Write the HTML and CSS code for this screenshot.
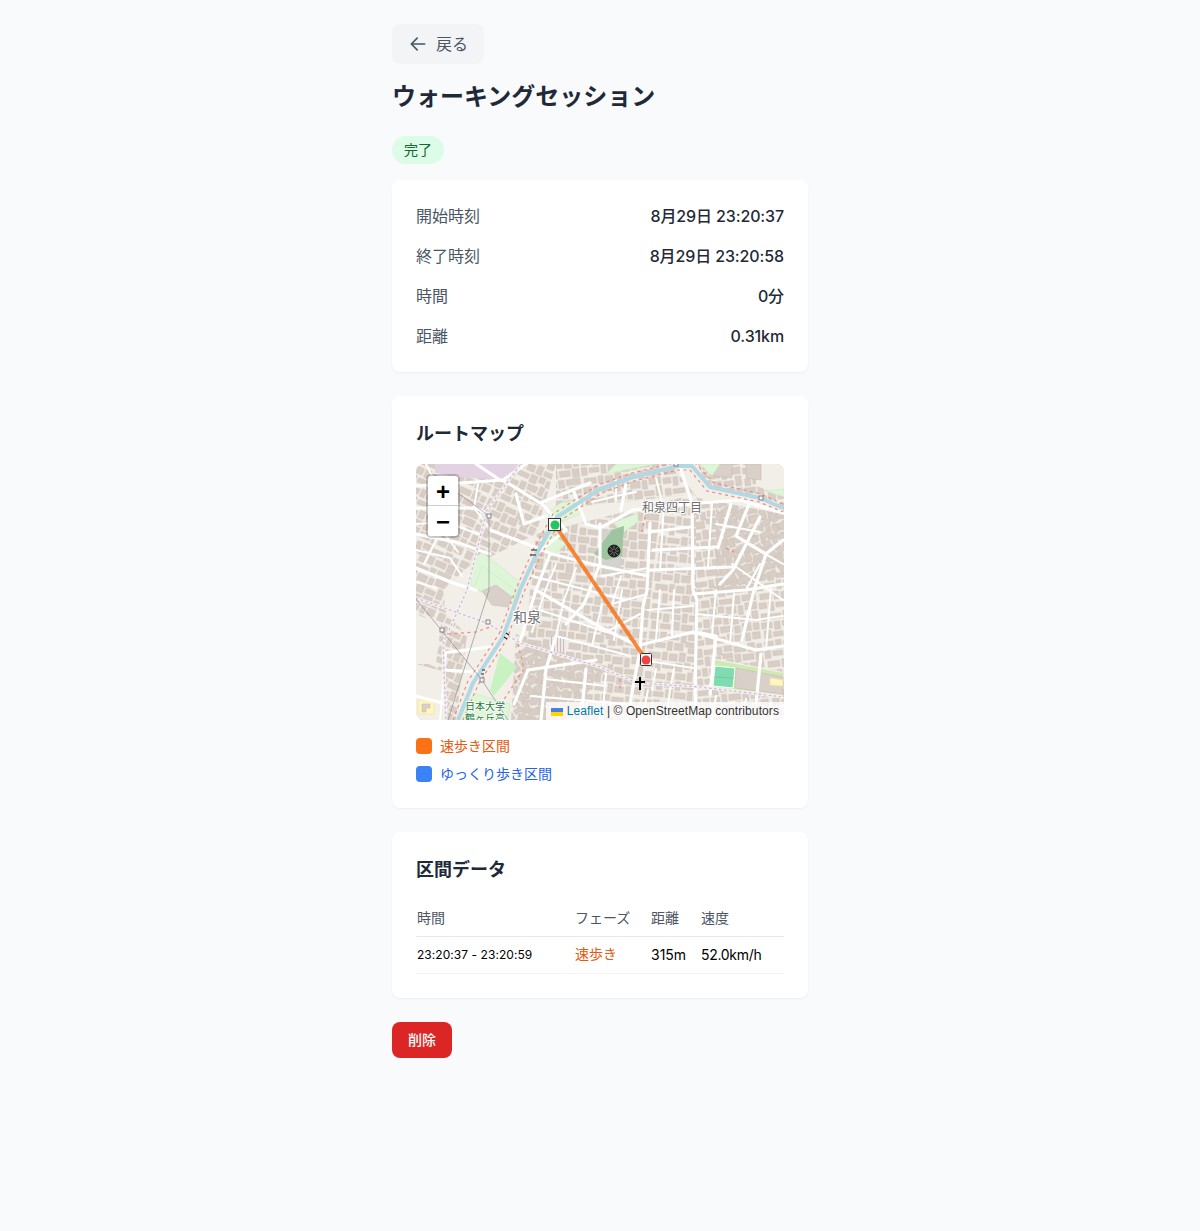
FILE: index.html
```html
<!DOCTYPE html>
<html lang="ja">
<head>
<meta charset="utf-8">
<title>ウォーキングセッション</title>
<link rel="stylesheet" href="styles.css">
</head>
<body>
<main class="page">
  <button class="back" type="button">
    <svg class="back-icon" viewBox="0 0 24 24" width="20" height="20"><path d="M20 12H4.500M11 5l-7 7 7 7"/></svg>
    <span class="back-text">戻る</span>
  </button>
  <h1 class="title">ウォーキングセッション</h1>
  <span class="badge">完了</span>

  <section class="card info">
    <div class="row"><span class="label">開始時刻</span><span class="value">8月29日 23:20:37</span></div>
    <div class="row"><span class="label">終了時刻</span><span class="value">8月29日 23:20:58</span></div>
    <div class="row"><span class="label">時間</span><span class="value">0分</span></div>
    <div class="row"><span class="label">距離</span><span class="value">0.31km</span></div>
  </section>

  <section class="card">
    <h2 class="card-title">ルートマップ</h2>
    <div class="map">
      <svg class="map-svg" viewBox="0 0 368 256" width="368" height="256">
        <defs>
          <g id="bld">
            <rect x="1" y="1" width="9" height="7"/><rect x="12" y="0" width="6" height="9"/><rect x="20" y="2" width="11" height="5"/><rect x="33" y="1" width="5" height="8"/><rect x="40" y="0" width="8" height="6"/><rect x="50" y="2" width="12" height="6"/><rect x="64" y="0" width="7" height="9"/><rect x="73" y="2" width="5" height="6"/>
            <rect x="0" y="10" width="6" height="8"/><rect x="8" y="11" width="10" height="5"/><rect x="20" y="9" width="5" height="9"/><rect x="27" y="10" width="9" height="7"/><rect x="38" y="8" width="10" height="5"/><rect x="41" y="14" width="7" height="5"/><rect x="50" y="10" width="6" height="8"/><rect x="58" y="11" width="11" height="6"/><rect x="71" y="10" width="7" height="9"/>
            <rect x="2" y="21" width="12" height="6"/><rect x="16" y="20" width="5" height="8"/><rect x="23" y="21" width="8" height="7"/><rect x="33" y="19" width="6" height="9"/><rect x="41" y="22" width="13" height="5"/><rect x="56" y="20" width="6" height="8"/><rect x="64" y="20" width="14" height="6"/>
            <rect x="0" y="30" width="8" height="6"/><rect x="10" y="30" width="5" height="9"/><rect x="17" y="31" width="11" height="5"/><rect x="30" y="30" width="7" height="8"/><rect x="39" y="29" width="6" height="6"/><rect x="47" y="30" width="10" height="7"/><rect x="59" y="30" width="5" height="9"/><rect x="66" y="28" width="12" height="7"/>
            <rect x="1" y="41" width="6" height="7"/><rect x="9" y="42" width="12" height="5"/><rect x="23" y="40" width="6" height="8"/><rect x="31" y="40" width="10" height="6"/><rect x="43" y="38" width="5" height="9"/><rect x="50" y="40" width="8" height="8"/><rect x="60" y="41" width="10" height="5"/><rect x="72" y="37" width="6" height="10"/>
            <rect x="0" y="50" width="11" height="6"/><rect x="13" y="50" width="6" height="8"/><rect x="21" y="50" width="9" height="5"/><rect x="32" y="48" width="5" height="9"/><rect x="39" y="49" width="12" height="6"/><rect x="53" y="50" width="6" height="7"/><rect x="61" y="48" width="9" height="8"/><rect x="72" y="49" width="6" height="7"/>
            <rect x="2" y="58" width="7" height="8"/><rect x="11" y="60" width="10" height="5"/><rect x="23" y="57" width="7" height="8"/><rect x="32" y="59" width="11" height="6"/><rect x="45" y="57" width="5" height="9"/><rect x="52" y="59" width="9" height="6"/><rect x="63" y="58" width="5" height="8"/><rect x="70" y="58" width="8" height="7"/>
          </g>
          <pattern id="pa" width="80" height="68" patternUnits="userSpaceOnUse" patternTransform="rotate(24)"><use href="#bld"/></pattern>
          <pattern id="pb" width="80" height="68" patternUnits="userSpaceOnUse" patternTransform="rotate(6) translate(9 5)"><use href="#bld"/></pattern>
          <pattern id="pc" width="80" height="68" patternUnits="userSpaceOnUse" patternTransform="rotate(-7) translate(3 14)"><use href="#bld"/></pattern>
          <pattern id="pd" width="80" height="68" patternUnits="userSpaceOnUse" patternTransform="rotate(-30) translate(20 8)"><use href="#bld"/></pattern>
          <pattern id="stripe" width="3" height="6" patternUnits="userSpaceOnUse"><rect width="3" height="6" fill="#efe9e6"/><rect width="1" height="6" fill="#c9bcc4"/></pattern>
        </defs>
        <rect class="land" width="368" height="256"/>
        <polygon class="residential" fill="url(#pa)" points="0,0 140,0 120,70 60,100 40,256 0,256"/>
        <polygon class="residential" fill="url(#pb)" points="120,70 280,30 280,256 100,256"/>
        <polygon class="residential" fill="url(#pc)" points="140,0 368,0 368,256 280,256 280,30 140,45"/>
        <polygon class="residential" fill="url(#pd)" points="300,40 368,40 368,110 300,130"/>
        <polygon class="residential" fill="url(#pd)" points="100,170 190,205 150,256 95,256"/>

        <polygon class="purple" points="19,0 104,0 91,16 44,13 19,9"/>
        <polygon class="land" points="340,0 368,0 368,32 340,22"/>
        <polygon class="land" points="254,0 282,0 290,20 345,34 367,42 367,50 282,34 262,10"/>
        <polygon class="bld-big" points="298,0 316,0 316,14 298,12"/>
        <polygon class="bld-big" points="330,0 345,0 345,16 330,14"/>
        <polygon class="park" points="190,10 240,0 212,0 200,0"/>
        <polygon class="park" points="284,0 304,0 296,12"/>
        <polygon class="park" points="350,27 368,25 368,33"/>

        <polygon class="land" points="27,126 66,90 104,120 96,175 70,190 30,150"/>
        <polygon class="park" points="54,99 66,88 104,118 98,140 56,124"/>
        <polygon class="park" points="66,102 99,126 97,140 58,124"/>
        <polygon class="bld-big" points="66,127 80,121 96,133 92,143 76,141"/>
        <polygon class="park-strong" points="74,226 84,189 101,203 78,232"/>
        <polygon class="land" points="0,150 25,160 20,200 0,200"/>
        <polygon class="land" points="0,200 30,208 28,256 0,256"/>
        <polygon class="park" points="52,236 60,230 94,240 92,256 41,256"/>

        <polygon class="park" points="127,53 144,39 168,34 164,50 145,58"/>
        <polygon class="park" points="130,66 150,80 137,92 128,84"/>
        <polygon class="park" points="197,59 222,49 222,58 208,68"/>
        <polygon class="grey" points="184,68 208,62 204,111 190,108 184,100"/>
        <polygon class="dark" points="178,90 190,74 196,66 208,62 206,92 190,96"/>

        <polygon class="road-bg" points="296,194 367,208 367,233 295,224"/>
        <polygon class="field-edge" points="299,196 367,209 367,231 297,223"/>
        <polygon class="field" points="299,202 319,204 317,224 297,222"/>
        <polyline class="field-line" points="298,213 318,214"/>
        <polygon class="bld-big" points="320,204 367,213 367,230 319,224"/>
        <polygon class="yellow" points="354,214 367,216 367,222 354,221"/>
        <polygon class="yellow" points="2,236 18,236 18,250 2,250"/>
        <polygon class="bld-big" points="6,240 14,240 14,244 10,244 10,248 6,248"/>
        <rect class="hatch" x="134" y="173" width="16" height="15" fill="url(#stripe)"/>

        <g class="lane">
          <polyline points="10,0 22,24 12,48 22,72 8,100"/>
          <polyline points="32,24 38,44 30,72 42,88"/>
          <polyline points="0,60 30,58 62,70"/>
          <polyline points="0,86 34,94 46,112"/>
          <polyline points="62,20 58,44 72,62"/>
          <polyline points="140,100 128,130 116,168"/>
          <polyline points="160,104 148,136 140,172"/>
          <polyline points="116,112 210,136"/>
          <polyline points="124,146 190,168 224,150"/>
          <polyline points="186,140 176,182"/>
          <polyline points="206,126 198,176"/>
          <polyline points="140,172 214,192"/>
          <polyline points="186,112 232,104"/>
          <polyline points="205,112 196,140 231,130"/>
          <polyline points="248,40 244,106"/>
          <polyline points="296,40 292,104"/>
          <polyline points="232,146 277,142"/>
          <polyline points="244,126 240,176"/>
          <polyline points="258,126 256,172"/>
          <polyline points="226,196 277,204"/>
          <polyline points="240,205 236,226"/>
          <polyline points="258,205 254,226"/>
          <polyline points="300,126 296,172"/>
          <polyline points="318,130 314,180"/>
          <polyline points="355,124 350,186"/>
          <polyline points="280,150 340,156 367,152"/>
          <polyline points="325,76 367,100"/>
          <polyline points="316,100 367,136"/>
          <polyline points="344,100 330,126"/>
          <polyline points="300,60 344,68"/>
          <polyline points="200,16 200,36"/>
          <polyline points="176,38 200,32 220,28"/>
          <polyline points="240,14 246,38"/>
          <polyline points="130,215 190,222"/>
          <polyline points="115,232 210,240"/>
          <polyline points="190,210 186,256"/>
          <polyline points="232,226 226,256"/>
          <polyline points="254,226 250,256"/>
          <polyline points="300,232 296,256"/>
          <polyline points="330,235 326,256"/>
          <polyline points="0,118 20,124"/>
          <polyline points="30,190 24,256"/>
        </g>
        <g class="road">
          <polyline points="0,22 44,19 87,16 124,39 174,19"/>
          <polyline points="87,16 110,0"/>
          <polyline points="60,0 84,16"/>
          <polyline points="100,30 108,60 130,52"/>
          <polyline points="0,44 60,44 72,50"/>
          <polyline points="74,66 127,86 135,90"/>
          <polyline points="0,70 40,78 74,90"/>
          <polyline points="0,104 40,120 60,126"/>
          <polyline points="126,40 150,66"/>
          <polyline points="158,28 170,60 184,64 217,46"/>
          <polyline points="134,90 120,126 104,178"/>
          <polyline points="136,90 184,102 232,112"/>
          <polyline points="217,46 284,39 324,36 367,49"/>
          <polyline points="264,3 276,39 277,126 281,136 279,226 281,256"/>
          <polyline points="234,59 231,126 227,143 224,186 214,240 210,256"/>
          <polyline points="234,68 274,63"/>
          <polyline points="237,86 301,83"/>
          <polyline points="234,106 317,103"/>
          <polyline points="344,53 317,106 304,120"/>
          <polyline points="315,40 302,84"/>
          <polyline points="333,40 320,72 350,90"/>
          <polyline points="367,76 350,90 338,126 326,176"/>
          <polyline points="367,120 330,126 277,130"/>
          <polyline points="224,181 277,168 340,186 367,182"/>
          <polyline points="184,163 224,183"/>
          <polyline points="120,126 184,163"/>
          <polyline points="184,60 184,100 168,140 150,160"/>
          <polyline points="280,168 300,172 294,230"/>
          <polyline points="27,189 74,183"/>
          <polyline points="27,206 61,208"/>
          <polyline points="112,206 180,196"/>
          <polyline points="112,206 98,240"/>
          <polyline points="140,172 130,205 125,256"/>
          <polyline points="170,205 165,256"/>
          <polyline points="210,20 205,46"/>
          <polyline points="150,66 120,90"/>
          <polyline points="345,190 340,240"/>
          <polyline points="0,232 30,240"/>
        </g>
        <g class="foot-base">
          <polyline points="104,1 71,46 51,126 27,180 30,256"/>
          <polyline points="0,134 71,159 104,179 184,203 221,219 284,223 367,233"/>
        </g>
        <g class="foot-dash">
          <polyline points="104,1 71,46 51,126 27,180 30,256"/>
          <polyline points="0,134 71,159 104,179 184,203 221,219 284,223 367,233"/>
        </g>
        <polyline class="river" points="42,256 57,219 87,173 104,126 121,89 141,53 184,25 217,13 262,2 276,2 294,23 344,34 367,44"/>
        <g class="boundary">
          <polyline points="37,256 52,217 83,170 100,125 117,86 137,50 182,21 216,9 262,-2 278,-2 298,19 345,30 367,40"/>
          <polyline points="47,256 62,221 91,175 108,128 125,91 145,56 186,29 218,17 262,6 274,6 291,27 343,38 367,48"/>
          <polyline points="32,170 60,168 74,163"/>
          <polyline points="102,180 108,205 85,240"/>
          <polyline points="232,40 226,68"/>
          <polyline points="310,84 322,90"/>
          <polyline points="204,215 204,226"/>
          <polyline points="207,160 204,172"/>
        </g>
        <g class="power">
          <polyline points="22,14 73,52 73,126 32,256"/>
          <polyline points="0,135 66,216 92,256"/>
        </g>
        <g class="pylons">
          <rect x="71" y="50" width="4" height="4"/>
          <rect x="70" y="156" width="4" height="4"/>
          <rect x="24" y="164" width="4" height="4"/>
          <rect x="64" y="214" width="4" height="4"/>
          <rect x="343" y="32" width="4" height="4"/>
          <rect x="258" y="-1" width="4" height="3"/>
        </g>
        <g class="bridges">
          <path d="M115 86h6M114 91h6M90 169l3 2M88 173l3 2M66 206h3M65 210h3"/>
        </g>
        <text class="place" x="226" y="48">和泉四丁目</text>
        <text class="place place-large" x="97" y="158">和泉</text>
        <text class="school" x="49" y="246">日本大学</text>
        <text class="school" x="49" y="258">鶴ヶ丘高</text>

        <g class="temple" transform="translate(198 87)">
          <circle r="6"/>
          <path d="M-4-4 4 4M-4 4 4-4M0-5V5M-5 0H5"/>
          <circle class="temple-hub" r="1.500"/>
        </g>
        <path class="church" d="M224 213v13M219 218h10"/>

        <polyline class="route" points="139,61 230,196"/>
        <rect class="marker-box" x="132.500" y="54.500" width="12" height="12"/>
        <circle class="marker-start" cx="139" cy="61" r="4.500"/>
        <rect class="marker-box" x="224.500" y="189.500" width="11" height="12" rx="1"/>
        <circle class="marker-end" cx="230" cy="196" r="4.500"/>
      </svg>
      <div class="zoom">
        <span class="zoom-btn">+</span>
        <span class="zoom-btn">−</span>
      </div>
      <div class="attrib">
        <svg class="flag" viewBox="0 0 12 8" width="12" height="8"><rect width="12" height="4" fill="#4C7BE1"/><rect y="4" width="12" height="4" fill="#FFD500"/></svg>
        <a class="attrib-link">Leaflet</a> | © OpenStreetMap contributors
      </div>
    </div>
    <ul class="legend">
      <li class="legend-item fast"><i class="swatch"></i><span>速歩き区間</span></li>
      <li class="legend-item slow"><i class="swatch"></i><span>ゆっくり歩き区間</span></li>
    </ul>
  </section>

  <section class="card">
    <h2 class="card-title">区間データ</h2>
    <table class="table">
      <colgroup><col class="c1"><col class="c2"><col class="c3"><col class="c4"></colgroup>
      <thead><tr><th>時間</th><th>フェーズ</th><th>距離</th><th>速度</th></tr></thead>
      <tbody><tr><td class="time">23:20:37 - 23:20:59</td><td class="phase">速歩き</td><td>315m</td><td class="speed">52.0km/h</td></tr></tbody>
    </table>
  </section>

  <button class="delete" type="button">削除</button>
</main>
</body>
</html>
```
FILE: styles.css
```css
* { box-sizing: border-box; }
html, body { margin: 0; padding: 0; }
body {
  background: #f9fafb;
  color: #1f2937;
  font-family: Inter, "Noto Sans CJK JP", sans-serif;
  min-height: 1231px;
}
.page {
  width: 416px;
  margin: 0 auto;
  padding-top: 24px;
  display: flex;
  flex-direction: column;
  align-items: flex-start;
}
.back {
  height: 40px;
  width: 92px;
  border: 0;
  border-radius: 8px;
  background: #f3f4f6;
  color: #4b5563;
  font: inherit;
  font-size: 16px;
  display: flex;
  align-items: center;
  gap: 8px;
  padding: 0 16px;
}
.back-icon { fill: none; stroke: #4b5563; stroke-width: 2; stroke-linecap: round; stroke-linejoin: round; flex: none; }
.back-text { line-height: 20px; padding-bottom: 1px; }
.title {
  margin: 17px 0 23px;
  font-size: 24px;
  line-height: 32px;
  font-weight: 700;
  color: #1f2937;
}
.badge {
  height: 28px;
  padding: 0 12px;
  border-radius: 14px;
  background: #dcfce7;
  color: #166534;
  font-size: 14px;
  line-height: 27px;
  margin-bottom: 16px;
}
.card {
  width: 100%;
  background: #fff;
  border-radius: 8px;
  box-shadow: 0 1px 2px rgba(0, 0, 0, .05);
  padding: 24px;
  margin-bottom: 24px;
}
.info { padding: 16px 24px; }
.row {
  height: 40px;
  display: flex;
  justify-content: space-between;
  align-items: center;
  font-size: 16px;
  line-height: 24px;
}
.label { color: #4b5563; }
.value { color: #1f2937; font-weight: 500; letter-spacing: -.12px; padding-bottom: 1px; }
.card-title {
  margin: 0 0 16px;
  font-size: 18px;
  line-height: 28px;
  font-weight: 600;
  color: #1f2937;
}
.map {
  position: relative;
  width: 368px;
  height: 256px;
  border-radius: 8px;
  overflow: hidden;
  background: #f2efe9;
}
.map-svg { display: block; }
.land { fill: #f2efe9; }
.residential { stroke: none; }
#bld { fill: #d8cec6; stroke: #c7bab0; stroke-width: .4; }
.purple { fill: #e2d2e2; }
.bld-big { fill: #d9d0c9; stroke: #c4b6ab; stroke-width: .5; }
.park { fill: #dff5d8; stroke: #c5e8bb; stroke-width: .5; }
.park-strong { fill: #c8f2c2; }
.grey { fill: #d4d2cf; }
.dark { fill: #9fc4a0; }
.road-bg { fill: #f2efe9; }
.field-edge { fill: #cdebb0; }
.field { fill: #7fdbb0; stroke: #fff; stroke-width: 1; }
.field-line { fill: none; stroke: #60c090; stroke-width: .5; }
.yellow { fill: #fdf6c3; stroke: #f2e79a; stroke-width: .8; }
.hatch { stroke: none; }
.lane { fill: none; stroke: #fff; stroke-width: 2; stroke-linecap: round; stroke-linejoin: round; }
.road { fill: none; stroke: #fff; stroke-width: 3.2; stroke-linecap: round; stroke-linejoin: round; }
.foot-base { fill: none; stroke: #f4f0f0; stroke-width: 3.2; }
.foot-dash { fill: none; stroke: #cdb6d4; stroke-width: 1.200; stroke-dasharray: 2.500 2.500; }
.river { fill: none; stroke: #b3d8e3; stroke-width: 4; stroke-linejoin: round; }
.boundary { fill: none; stroke: #f08a7e; stroke-width: 1.200; stroke-dasharray: 3 3.500; }
.power { fill: none; stroke: #8f8f8f; stroke-width: .7; }
.pylons { fill: #f4f4f4; stroke: #6f6f6f; stroke-width: .8; }
.bridges { fill: none; stroke: #222; stroke-width: 1.200; }
.place { font-size: 12px; fill: #6d6d6d; stroke: #fff; stroke-width: 2; paint-order: stroke; font-family: "Noto Sans CJK JP", sans-serif; }
.place-large { font-size: 14px; }
.school { font-size: 10px; fill: #1a7a3a; stroke: #fff; stroke-width: 1.5; paint-order: stroke; font-family: "Noto Sans CJK JP", sans-serif; }
.temple circle { fill: #222; stroke: #111; stroke-width: .8; }
.temple path { fill: none; stroke: #aaa; stroke-width: .6; }
.temple .temple-hub { fill: #222; stroke: none; }
.church { fill: none; stroke: #000; stroke-width: 2; }
.route { fill: none; stroke: #f97316; stroke-opacity: .85; stroke-width: 4; }
.marker-box { fill: #f6f6f6; stroke: #333; stroke-width: 1; }
.marker-start { fill: #22c55e; }
.marker-end { fill: #ef4444; }
.zoom {
  position: absolute;
  left: 10px;
  top: 10px;
  width: 34px;
  border: 2px solid rgba(0, 0, 0, .2);
  border-radius: 5px;
  background-clip: padding-box;
  display: flex;
  flex-direction: column;
}
.zoom-btn {
  height: 30px;
  width: 30px;
  background: #fff;
  color: #000;
  font: 700 24px/32px "Liberation Sans", sans-serif;
  text-align: center;
}
.zoom-btn:first-child { border-bottom: 1px solid #ccc; border-radius: 3px 3px 0 0; }
.zoom-btn:last-child { border-radius: 0 0 3px 3px; }
.attrib {
  position: absolute;
  right: 0;
  bottom: 0;
  height: 18px;
  padding: 0 5px;
  background: rgba(255, 255, 255, .8);
  color: #333;
  font: 12px/18px "Liberation Sans", sans-serif;
  letter-spacing: .09px;
  white-space: nowrap;
}
.attrib-link { color: #0078a8; }
.flag { margin-right: 0; vertical-align: -0.5px; }
.legend { list-style: none; margin: 16px 0 0; padding: 0; display: flex; flex-direction: column; gap: 8px; }
.legend-item { height: 20px; display: flex; align-items: center; gap: 8px; font-size: 14px; line-height: 20px; }
.swatch { width: 16px; height: 16px; border-radius: 4px; }
.fast { color: #ea580c; }
.fast .swatch { background: #f97316; }
.slow { color: #2563eb; }
.slow .swatch { background: #3b82f6; }
.table { width: 368px; table-layout: fixed; border-collapse: collapse; font-size: 14px; line-height: 20px; color: #000; }
.c1 { width: 158px; }
.c2 { width: 76px; }
.c3 { width: 50px; }
.c4 { width: 84px; }
.table th { text-align: left; font-weight: 400; color: #4b5563; height: 36px; padding: 0 1px; border-bottom: 1px solid #e5e7eb; }
.table td { height: 37px; padding: 0 1px; border-bottom: 1px solid #f3f4f6; white-space: nowrap; }
.table .time { font-size: 12px; letter-spacing: .05px; }
.table .phase { color: #ea580c; padding-bottom: 2px; }
.table .speed { letter-spacing: -.3px; }
.delete {
  width: 60px;
  height: 36px;
  border: 0;
  border-radius: 8px;
  background: #dc2626;
  color: #fff;
  font: inherit;
  font-size: 14px;
  font-weight: 500;
  padding: 0;
  line-height: 20px;
}
```
